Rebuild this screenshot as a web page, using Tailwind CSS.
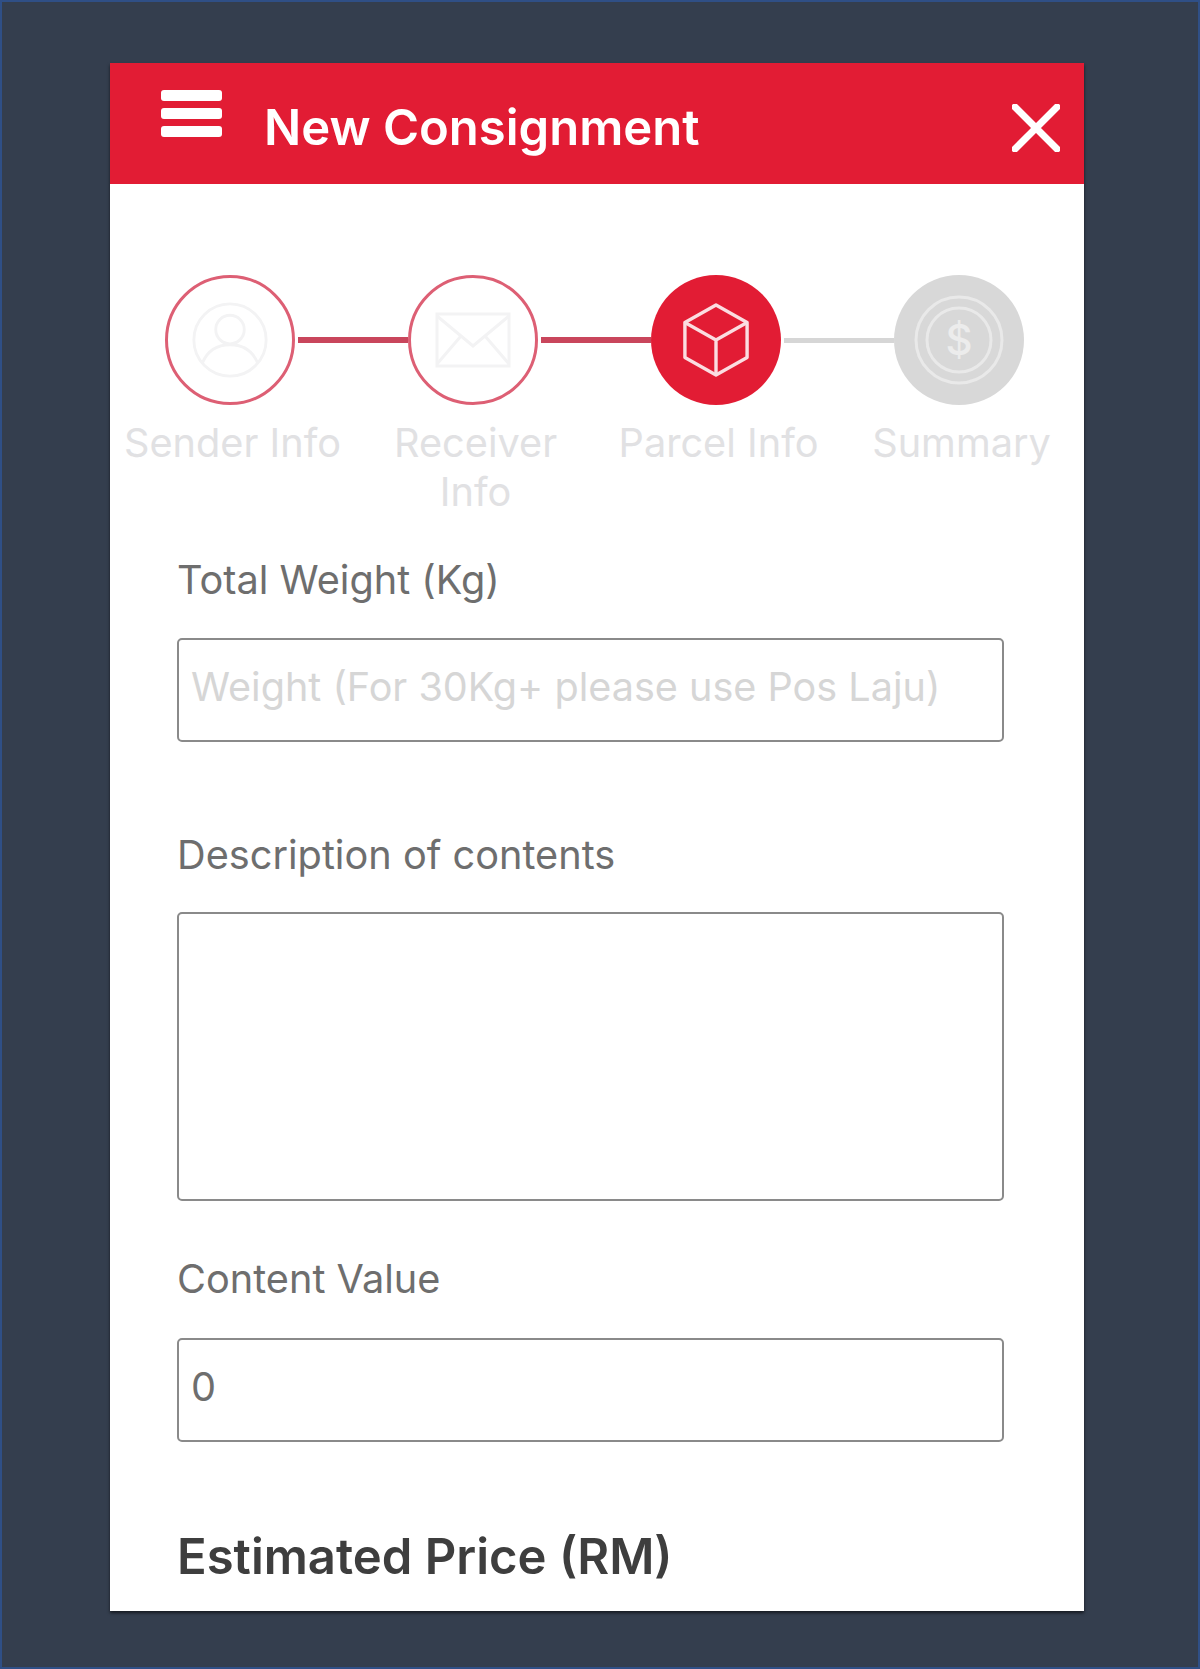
<!DOCTYPE html>
<html lang="en">
<head>
    <meta charset="UTF-8">
    <title>New Consignment</title>
    <script src="https://cdn.jsdelivr.net/npm/@tailwindcss/browser@4"></script>
</head>
<body class="bg-[#343e4e] font-['Inter',sans-serif]">
    <div class="h-[1669px] border-2 border-[#2f4f86] pt-[61px] pl-[108px] pr-[114px]">
        <div class="h-[1548px] bg-white overflow-hidden shadow-[0_2px_3px_rgba(0,0,0,0.6)]">

            <header class="h-[121px] bg-[#e21c34] flex items-start text-white">
                <div class="ml-[51px] mt-[27px] w-[61px] flex flex-col gap-[7px]">
                    <div class="h-[11px] rounded-[3px] bg-white"></div>
                    <div class="h-[11px] rounded-[3px] bg-white"></div>
                    <div class="h-[11px] rounded-[3px] bg-white"></div>
                </div>
                <h1 class="ml-[42px] mt-[37px] text-[49px] leading-[56px] font-semibold">New Consignment</h1>
                <svg class="ml-auto mr-[24px] mt-[41px]" width="48" height="48" viewBox="0 0 48 48" fill="none" stroke="white" stroke-width="7" stroke-linecap="round"><path d="M3 3 45 45M45 3 3 45"/></svg>
            </header>

            <div class="mt-[91px] ml-[55px] flex items-center">
                <div class="w-[130px] h-[130px] shrink-0 rounded-full border-[3px] border-[#dd5f74] flex items-center justify-center">
                    <svg width="78" height="78" viewBox="0 0 82 82" fill="none" stroke="#f3f3f4" stroke-width="3"><circle cx="41" cy="41" r="38"/><circle cx="41" cy="30" r="15"/><path d="M12 65c6-14 17-19 29-19s23 5 29 19"/></svg>
                </div>
                <div class="w-[110px] h-[6px] ml-[3px] bg-[#c9465c]"></div>
                <div class="w-[130px] h-[130px] shrink-0 rounded-full border-[3px] border-[#dd5f74] flex items-center justify-center">
                    <svg width="76" height="56" viewBox="0 0 76 56" fill="none" stroke="#f3f3f4" stroke-width="3"><rect x="2" y="2" width="72" height="52"/><path d="M2 4 38 34 74 4M2 52 26 24M74 52 50 24"/></svg>
                </div>
                <div class="w-[110px] h-[6px] ml-[3px] bg-[#c9465c]"></div>
                <div class="w-[130px] h-[130px] shrink-0 rounded-full bg-[#e21c34] flex items-center justify-center">
                    <svg width="68" height="74" viewBox="0 0 70 76" fill="none" stroke="#fbdde1" stroke-width="3.5" stroke-linejoin="round"><path d="M35 2 67 20V56L35 74 3 56V20Z"/><path d="M3 20 35 38 67 20M35 38V74"/></svg>
                </div>
                <div class="w-[110px] h-[5px] ml-[3px] bg-[#d6d6d6]"></div>
                <div class="w-[130px] h-[130px] shrink-0 rounded-full bg-[#d8d8d8] flex items-center justify-center">
                    <svg width="90" height="90" viewBox="0 0 90 90" fill="none" stroke="#e9e9e9" stroke-width="3"><circle cx="45" cy="45" r="43"/><circle cx="45" cy="45" r="32"/><text x="45" y="60" text-anchor="middle" font-size="42" font-weight="500" fill="#ececec" stroke="none" font-family="Inter, sans-serif">$</text></svg>
                </div>
            </div>

            <div class="grid grid-cols-[243px_243px_243px_243px] ml-[1px] mt-[14px] text-center text-[39.7px] leading-[49px] text-[#e1e1e3]">
                <div>Sender Info</div>
                <div class="px-[40px]">Receiver Info</div>
                <div>Parcel Info</div>
                <div>Summary</div>
            </div>

            <form class="ml-[67px] w-[827px] text-[#6e6e6e]">
                <label class="block mt-[39px] text-[39.7px] leading-[48px]">Total Weight (Kg)</label>
                <div class="mt-[34px] h-[104px] rounded-[5px] border-2 border-[#8a8a8a] pl-[12px] pb-[4px] flex items-center text-[39.6px] whitespace-nowrap text-[#d6d6d6]">Weight (For 30Kg+ please use Pos Laju)</div>

                <label class="block mt-[89px] text-[39.7px] leading-[48px]">Description of contents</label>
                <div class="mt-[33px] h-[289px] rounded-[5px] border-2 border-[#8a8a8a]"></div>

                <label class="block mt-[54px] text-[39.7px] leading-[48px]">Content Value</label>
                <div class="mt-[35px] h-[104px] rounded-[5px] border-2 border-[#8a8a8a] pl-[12px] pb-[5px] flex items-center text-[39.7px]">0</div>

                <h2 class="mt-[87px] text-[49px] leading-[56px] font-semibold text-[#3e3e3e]">Estimated Price (RM)</h2>
            </form>
        </div>
    </div>
</body>
</html>
